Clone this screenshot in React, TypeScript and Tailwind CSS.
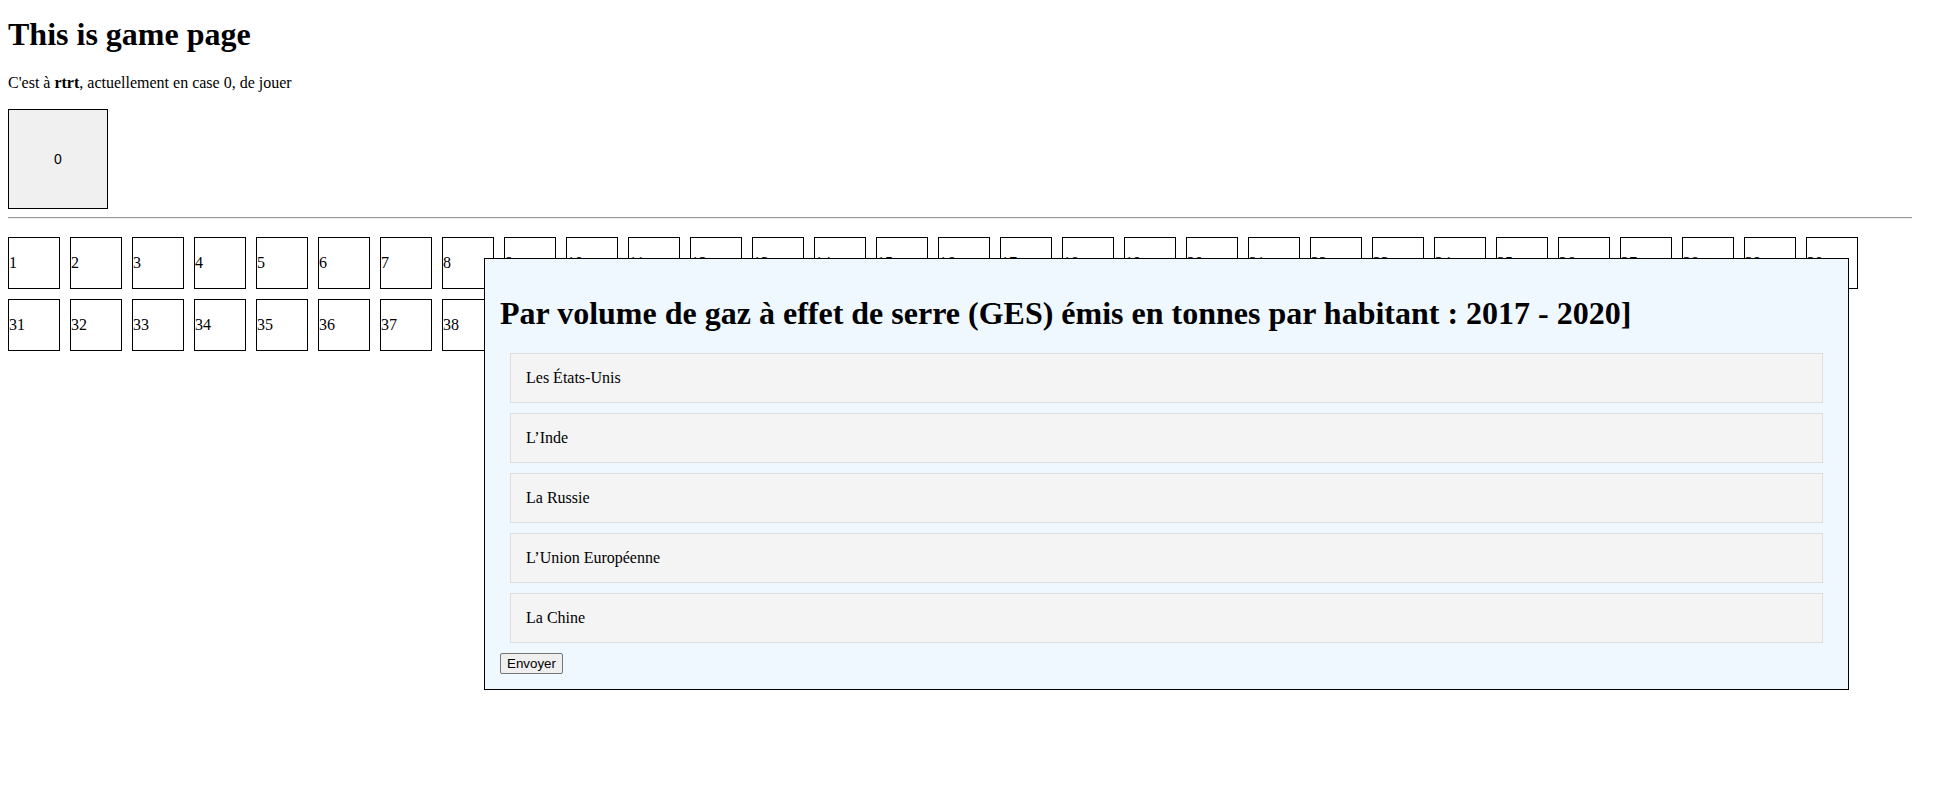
import React from "react";

const row1 = Array.from({ length: 30 }, (_, i) => i + 1);
const row2 = Array.from({ length: 20 }, (_, i) => i + 31);
const options = ["Les États-Unis", "L’Inde", "La Russie", "L’Union Européenne", "La Chine"];

function Cell({ n }: { n: number }) {
  return (
    <div className="w-[52px] h-[52px] shrink-0 border border-black flex items-center text-[16px] leading-[18px]">
      {n}
    </div>
  );
}

export default function App() {
  return (
    <div className="relative min-h-[798px] bg-white text-black font-['Liberation_Serif','Times_New_Roman',serif]">
      <div className="px-2 pt-[16px] flow-root">
        <h1 className="text-[32px] leading-[37px] font-bold">This is game page</h1>
        <p className="text-[16px] leading-[18px] mt-[21px]">
          C'est à <b>rtrt</b>, actuellement en case 0, de jouer
        </p>
        <div className="mt-[17px] w-[100px] h-[100px] border border-black bg-[#f0f0f0] flex items-center justify-center font-['Liberation_Sans',Arial,sans-serif] text-[14px]">
          0
        </div>
        <hr className="w-[1904px] mt-[8px] border-0 border-t border-t-[#9a9a9a] border-b border-b-[#eeeeee]" />
        <div className="mt-[18px] flex flex-col gap-[10px]">
          <div className="flex gap-[10px]">
            {row1.map((n) => (
              <Cell key={n} n={n} />
            ))}
          </div>
          <div className="flex gap-[10px]">
            {row2.map((n) => (
              <Cell key={n} n={n} />
            ))}
          </div>
        </div>
      </div>

      <div className="absolute left-[484px] top-[258px] w-[1365px] border border-black bg-[#f0f8ff] p-[15px] pb-[14px]">
        <h2 className="text-[32px] leading-[37px] font-bold my-[21px]">
          Par volume de gaz à effet de serre (GES) émis en tonnes par habitant : 2017 - 2020]
        </h2>
        <div className="mx-[10px] flex flex-col gap-[10px]">
          {options.map((o) => (
            <div
              key={o}
              className="h-[50px] border border-[#dddddd] bg-[#f4f4f4] pl-[15px] flex items-center text-[16px]"
            >
              {o}
            </div>
          ))}
        </div>
        <button className="mt-[10px] h-[21px] px-[6px] border border-[#767676] rounded-[2px] bg-[#efefef] font-['Liberation_Sans',Arial,sans-serif] text-[13.33px] leading-[17px] text-black">
          Envoyer
        </button>
      </div>
    </div>
  );
}
